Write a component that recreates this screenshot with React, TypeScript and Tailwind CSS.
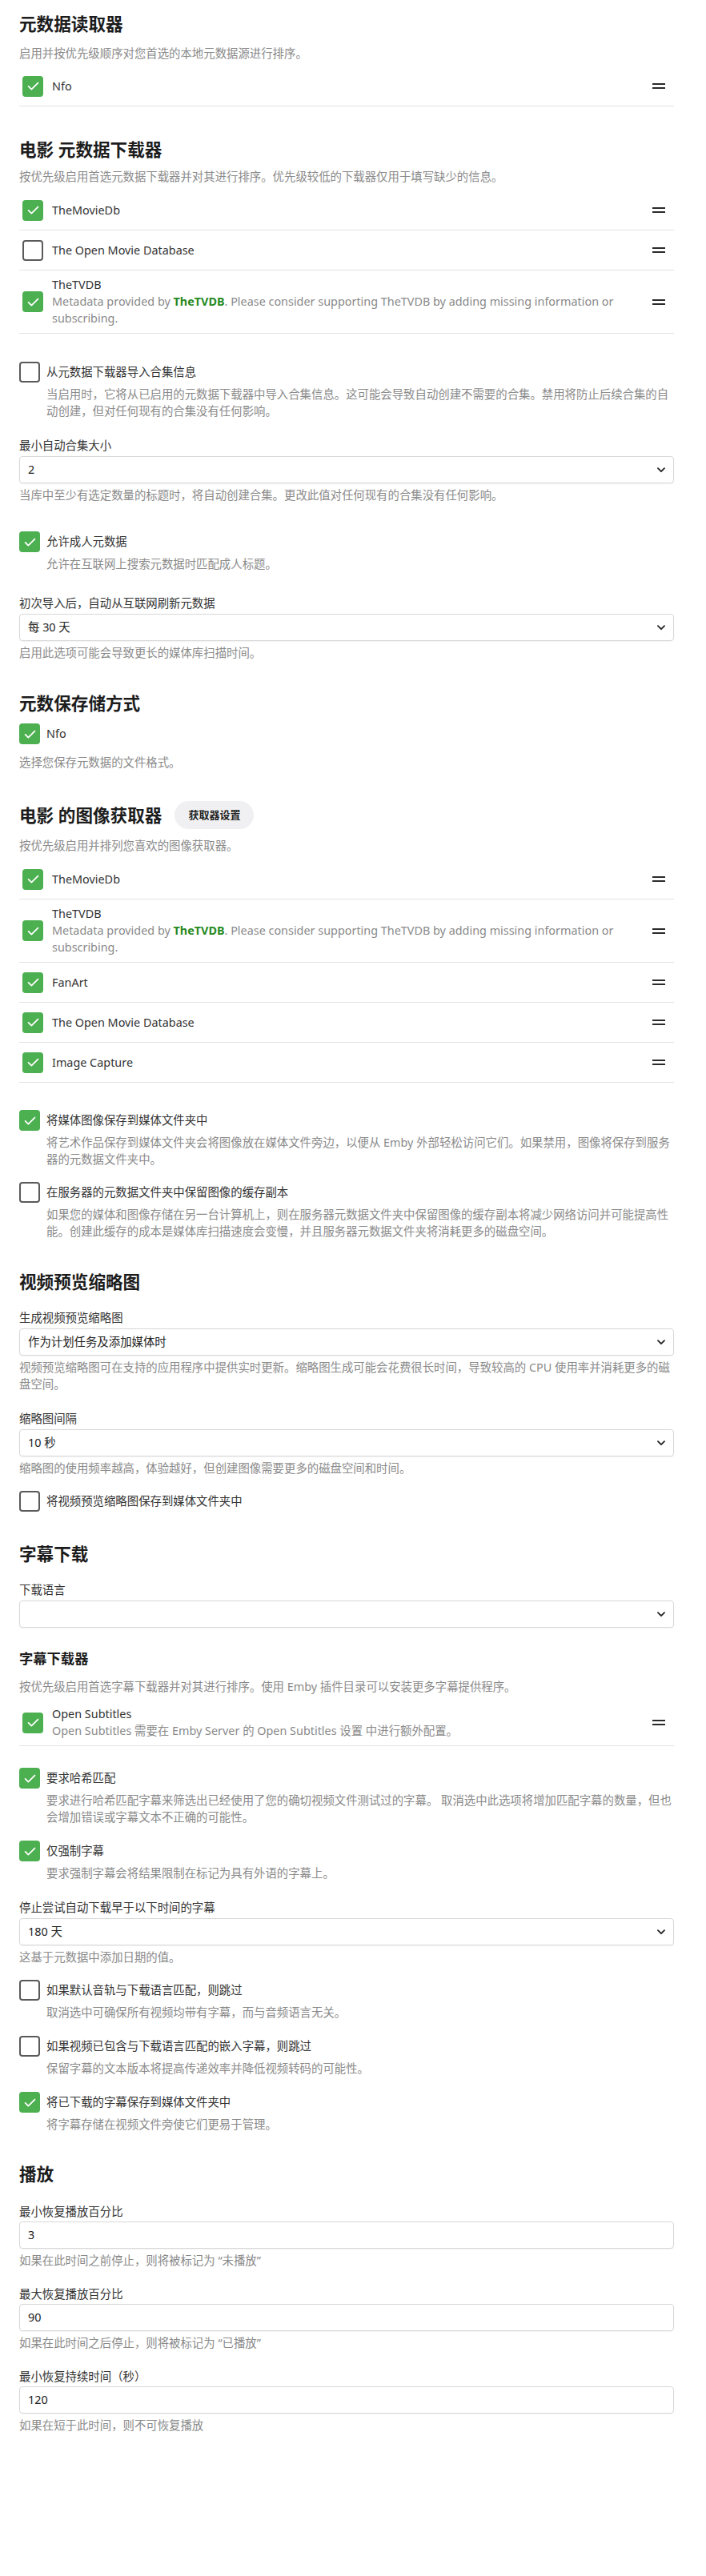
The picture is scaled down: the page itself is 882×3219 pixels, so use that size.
import type { ReactNode } from "react";

// 勾选框
function Check({ checked }: { checked: boolean }) {
  if (checked) {
    return (
      <span className="flex h-[26px] w-[26px] shrink-0 items-center justify-center rounded-[4px] bg-[#4caf50]">
        <svg viewBox="0 0 24 24" className="h-[19px] w-[19px]" fill="none" stroke="#fff" strokeWidth="2.2" strokeLinecap="round" strokeLinejoin="round">
          <path d="M4.5 12.5l4.8 4.8L19.5 7" />
        </svg>
      </span>
    );
  }
  return <span className="h-[26px] w-[26px] shrink-0 rounded-[4px] border-2 border-[#5a5a5a]" />;
}

function Handle() {
  return (
    <span className="flex w-4 shrink-0 flex-col gap-[3px]">
      <span className="h-[2px] bg-[#2a2a2a]" />
      <span className="h-[2px] bg-[#2a2a2a]" />
    </span>
  );
}

function Chevron() {
  return (
    <svg viewBox="0 0 10 7" className="h-[7px] w-[10px]" fill="none" stroke="#222" strokeWidth="1.8" strokeLinecap="round" strokeLinejoin="round">
      <path d="M1 1.2l4 4 4-4" />
    </svg>
  );
}

function Title({ children, className = "" }: { children: ReactNode; className?: string }) {
  return <h2 className={`text-[21.6px] font-bold leading-[30px] text-[#1c1c1c] ${className}`}>{children}</h2>;
}

function Desc({ children, className = "" }: { children: ReactNode; className?: string }) {
  return <p className={`text-[14.4px] leading-[20px] text-[#8a8a8a] ${className}`}>{children}</p>;
}

interface ProviderRowProps {
  name: string;
  checked: boolean;
  desc?: ReactNode;
}

function ProviderRow({ name, checked, desc }: ProviderRowProps) {
  return (
    <div className="flex min-h-[50px] items-center border-b border-[#e2e2e2] py-2 pl-1 pr-[11px]">
      <Check checked={checked} />
      <div className="ml-[11px] flex-1 pr-[30px]">
        <div className="text-[14.4px] leading-5 text-[#333]">{name}</div>
        {desc && <div className="text-[14.4px] leading-[21px] text-[#8a8a8a]">{desc}</div>}
      </div>
      <Handle />
    </div>
  );
}

function CheckField({ label, checked, desc, className = "" }: { label: string; checked: boolean; desc?: string; className?: string }) {
  return (
    <div className={className}>
      <div className="flex items-center gap-2">
        <Check checked={checked} />
        <span className="text-[14.4px] leading-5 text-[#333]">{label}</span>
      </div>
      {desc && <p className="mt-1 pl-[34px] text-[14.4px] leading-[21px] text-[#8a8a8a]">{desc}</p>}
    </div>
  );
}

function SelectField({ label, value, desc, className = "" }: { label: string; value: string; desc?: string; className?: string }) {
  return (
    <div className={className}>
      <div className="text-[14.4px] leading-5 text-[#333]">{label}</div>
      <div className="mt-[3px] flex h-[34px] items-center justify-between rounded-[4px] border border-[#d8d8d8] pl-[10px] pr-[10px] shadow-[0_1px_1px_rgba(0,0,0,0.05)]">
        <span className="text-[14.4px] text-[#222]">{value}</span>
        <Chevron />
      </div>
      {desc && <p className="mt-1 text-[14.4px] leading-[21px] text-[#8a8a8a]">{desc}</p>}
    </div>
  );
}

function InputField({ label, value, desc, className = "" }: { label: string; value: string; desc: string; className?: string }) {
  return (
    <div className={className}>
      <div className="text-[14.4px] leading-5 text-[#333]">{label}</div>
      <div className="mt-[2px] flex h-[34px] items-center rounded-[4px] border border-[#d8d8d8] pl-[10px] shadow-[0_1px_1px_rgba(0,0,0,0.05)]">
        <span className="text-[14.4px] text-[#222]">{value}</span>
      </div>
      <p className="mt-1 text-[14.4px] leading-[21px] text-[#8a8a8a]">{desc}</p>
    </div>
  );
}

const tvdbDesc = (
  <>
    Metadata provided by <span className="font-bold text-[#25891f]">TheTVDB</span>. Please consider supporting TheTVDB by adding missing information or subscribing.
  </>
);

export default function App() {
  return (
    <div className="min-h-[3219px] bg-white pb-40 pl-6 pr-10 pt-[15px] font-['Noto_Sans','Noto_Sans_CJK_SC',sans-serif]">
      {/* 元数据读取器 */}
      <Title>元数据读取器</Title>
      <Desc className="mt-3">启用并按优先级顺序对您首选的本地元数据源进行排序。</Desc>
      <div className="mt-[6px]">
        <ProviderRow name="Nfo" checked />
      </div>

      {/* 元数据下载器 */}
      <Title className="mt-[39px]">电影 元数据下载器</Title>
      <Desc className="mt-[9px]">按优先级启用首选元数据下载器并对其进行排序。优先级较低的下载器仅用于填写缺少的信息。</Desc>
      <div className="mt-[7px]">
        <ProviderRow name="TheMovieDb" checked />
        <ProviderRow name="The Open Movie Database" checked={false} />
        <ProviderRow name="TheTVDB" checked desc={tvdbDesc} />
      </div>

      <CheckField
        className="mt-[35px]"
        label="从元数据下载器导入合集信息"
        checked={false}
        desc="当启用时，它将从已启用的元数据下载器中导入合集信息。这可能会导致自动创建不需要的合集。禁用将防止后续合集的自动创建，但对任何现有的合集没有任何影响。"
      />
      <SelectField
        className="mt-[23px]"
        label="最小自动合集大小"
        value="2"
        desc="当库中至少有选定数量的标题时，将自动创建合集。更改此值对任何现有的合集没有任何影响。"
      />
      <CheckField className="mt-[35px]" label="允许成人元数据" checked desc="允许在互联网上搜索元数据时匹配成人标题。" />
      <SelectField className="mt-[29px]" label="初次导入后，自动从互联网刷新元数据" value="每 30 天" desc="启用此选项可能会导致更长的媒体库扫描时间。" />

      {/* 元数保存储方式 */}
      <Title className="mt-[38px]">元数保存储方式</Title>
      <CheckField className="mt-[10px]" label="Nfo" checked />
      <Desc className="mt-[13px]">选择您保存元数据的文件格式。</Desc>

      {/* 图像获取器 */}
      <div className="mt-[38px] flex items-center gap-4">
        <Title>电影 的图像获取器</Title>
        <button className="h-[35px] rounded-full bg-[#f0f0f2] px-[17px] text-[13px] font-bold text-[#222]">获取器设置</button>
      </div>
      <Desc className="mt-[11px]">按优先级启用并排列您喜欢的图像获取器。</Desc>
      <div className="mt-[7px]">
        <ProviderRow name="TheMovieDb" checked />
        <ProviderRow name="TheTVDB" checked desc={tvdbDesc} />
        <ProviderRow name="FanArt" checked />
        <ProviderRow name="The Open Movie Database" checked />
        <ProviderRow name="Image Capture" checked />
      </div>

      <CheckField
        className="mt-[34px]"
        label="将媒体图像保存到媒体文件夹中"
        checked
        desc="将艺术作品保存到媒体文件夹会将图像放在媒体文件旁边，以便从 Emby 外部轻松访问它们。如果禁用，图像将保存到服务器的元数据文件夹中。"
      />
      <CheckField
        className="mt-[18px]"
        label="在服务器的元数据文件夹中保留图像的缓存副本"
        checked={false}
        desc="如果您的媒体和图像存储在另一台计算机上，则在服务器元数据文件夹中保留图像的缓存副本将减少网络访问并可能提高性能。创建此缓存的成本是媒体库扫描速度会变慢，并且服务器元数据文件夹将消耗更多的磁盘空间。"
      />

      {/* 视频预览缩略图 */}
      <Title className="mt-[38px]">视频预览缩略图</Title>
      <SelectField
        className="mt-5"
        label="生成视频预览缩略图"
        value="作为计划任务及添加媒体时"
        desc="视频预览缩略图可在支持的应用程序中提供实时更新。缩略图生成可能会花费很长时间，导致较高的 CPU 使用率并消耗更多的磁盘空间。"
      />
      <SelectField className="mt-[23px]" label="缩略图间隔" value="10 秒" desc="缩略图的使用频率越高，体验越好，但创建图像需要更多的磁盘空间和时间。" />
      <CheckField className="mt-[18px]" label="将视频预览缩略图保存到媒体文件夹中" checked={false} />

      {/* 字幕下载 */}
      <Title className="mt-[38px]">字幕下载</Title>
      <SelectField className="mt-5" label="下载语言" value="" />
      <h3 className="mt-[26px] text-[17.3px] font-bold leading-[26px] text-[#1c1c1c]">字幕下载器</h3>
      <Desc className="mt-3">按优先级启用首选字幕下载器并对其进行排序。使用 Emby 插件目录可以安装更多字幕提供程序。</Desc>
      <div className="mt-[6px]">
        <ProviderRow name="Open Subtitles" checked desc="Open Subtitles 需要在 Emby Server 的 Open Subtitles 设置 中进行额外配置。" />
      </div>

      <CheckField
        className="mt-[27px]"
        label="要求哈希匹配"
        checked
        desc="要求进行哈希匹配字幕来筛选出已经使用了您的确切视频文件测试过的字幕。 取消选中此选项将增加匹配字幕的数量，但也会增加错误或字幕文本不正确的可能性。"
      />
      <CheckField className="mt-[19px]" label="仅强制字幕" checked desc="要求强制字幕会将结果限制在标记为具有外语的字幕上。" />
      <SelectField className="mt-[23px]" label="停止尝试自动下载早于以下时间的字幕" value="180 天" desc="这基于元数据中添加日期的值。" />
      <CheckField className="mt-[18px]" label="如果默认音轨与下载语言匹配，则跳过" checked={false} desc="取消选中可确保所有视频均带有字幕，而与音频语言无关。" />
      <CheckField className="mt-[19px]" label="如果视频已包含与下载语言匹配的嵌入字幕，则跳过" checked={false} desc="保留字幕的文本版本将提高传递效率并降低视频转码的可能性。" />
      <CheckField className="mt-[19px]" label="将已下载的字幕保存到媒体文件夹中" checked desc="将字幕存储在视频文件旁使它们更易于管理。" />

      {/* 播放 */}
      <Title className="mt-[37px]">播放</Title>
      <InputField className="mt-[22px]" label="最小恢复播放百分比" value="3" desc="如果在此时间之前停止，则将被标记为 “未播放”" />
      <InputField className="mt-[22px]" label="最大恢复播放百分比" value="90" desc="如果在此时间之后停止，则将被标记为 “已播放”" />
      <InputField className="mt-[22px]" label="最小恢复持续时间（秒）" value="120" desc="如果在短于此时间，则不可恢复播放" />
    </div>
  );
}
